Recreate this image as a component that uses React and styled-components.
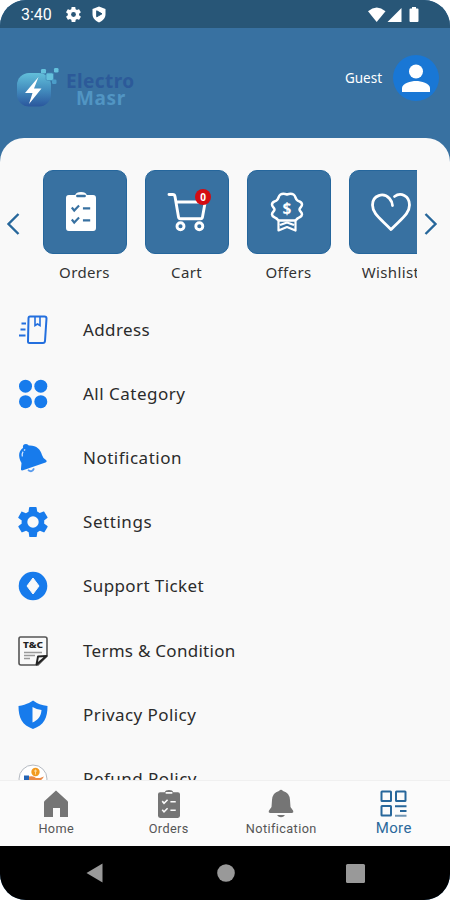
import React from 'react'
import styled, { createGlobalStyle } from 'styled-components'

const GlobalStyle = createGlobalStyle`
  * { box-sizing: border-box; }
  body { margin: 0; background: #fff; }
  svg { display: block; flex: none; overflow: visible; }
`;

const Phone = styled.div`
  width: 450px;
  height: 900px;
  display: flex;
  flex-direction: column;
  overflow: hidden;
  border-radius: 26px;
  background: #3871a1;
  font-family: "Noto Sans", "Open Sans", sans-serif;
`;

const StatusBar = styled.div`
  height: 28px;
  flex: none;
  display: flex;
  align-items: center;
  padding: 1px 31px 0 21px;
  background: #285677;
  color: #fff;
`;

const Clock = styled.span`
  font-family: Roboto, sans-serif;
  font-size: 16px;
  line-height: 20px;
  width: 45px;
`;

const StatusIcons = styled.div`
  display: flex;
  align-items: center;
  gap: 11px;
  margin-left: ${props => props.$end ? 'auto' : '0'};
`;

const Header = styled.header`
  height: 110px;
  flex: none;
  display: flex;
  justify-content: space-between;
  padding: 27px 11px 0 16px;
`;

const Brand = styled.div`
  display: flex;
  padding-top: 13px;
`;

const BrandName = styled.div`
  display: flex;
  flex-direction: column;
  padding: 5px 0 0 7px;
  font-size: 19px;
  font-weight: 700;
  line-height: 17px;
`;

const BrandWord = styled.span`
  color: ${props => props.$color};
  padding-left: ${props => props.$indent}px;
  letter-spacing: ${props => props.$spacing}px;
`;

const User = styled.div`
  display: flex;
  align-items: center;
  gap: 11px;
  height: 46px;
  color: #fff;
  font-size: 13.5px;
`;

const Avatar = styled.div`
  width: 46px;
  height: 46px;
  border-radius: 50%;
  background: #1977d5;
  display: flex;
  align-items: center;
  justify-content: center;
`;

const Sheet = styled.main`
  flex: 1;
  min-height: 0;
  display: flex;
  flex-direction: column;
  overflow: hidden;
  border-radius: 24px 24px 0 0;
  background: #f9f9f9;
`;

const Carousel = styled.section`
  display: flex;
  flex: none;
  height: 159.5px;
  padding-top: 32px;
`;

const Arrow = styled.div`
  width: 33px;
  height: 107px;
  flex: none;
  display: flex;
  align-items: center;
  justify-content: ${props => props.$right ? 'flex-start' : 'flex-end'};
  padding: ${props => props.$right ? '0 0 0 7px' : '0 13px 0 0'};
`;

const Strip = styled.div`
  flex: 1;
  display: flex;
  gap: 18px;
  padding-left: 10px;
  overflow: hidden;
`;

const Shortcut = styled.div`
  width: 84px;
  flex: none;
  display: flex;
  flex-direction: column;
  align-items: center;
`;

const Caption = styled.span`
  padding-right: 1px;
  color: #333;
  font-size: 15px;
  line-height: 20px;
  letter-spacing: 0.35px;
  white-space: nowrap;
`;

const Tile = styled.div`
  position: relative;
  width: 84px;
  height: 84px;
  margin-bottom: 8px;
  padding: 0 ${props => props.$inset || 0}px 1px 0;
  border-radius: 10px;
  background: #3871a1;
  border: 1px solid #25669c;
  display: flex;
  align-items: center;
  justify-content: center;
`;

const Badge = styled.span`
  position: absolute;
  top: 18px;
  left: 49px;
  width: 16px;
  height: 16px;
  border-radius: 50%;
  background: #d40b12;
  color: #fff;
  font-size: 10px;
  font-weight: 700;
  line-height: 16px;
  text-align: center;
`;

const Menu = styled.ul`
  flex: 1;
  min-height: 0;
  margin: 0;
  padding: 0;
  list-style: none;
  overflow: hidden;
`;

const MenuItem = styled.li`
  height: 64.2px;
  display: flex;
  align-items: center;
  gap: 35px;
  padding-left: 18px;
  color: #2b2b2b;
  font-size: 17px;
  line-height: 24px;
  letter-spacing: ${props => props.$spacing}px;
`;

const BottomNav = styled.nav`
  height: 66px;
  flex: none;
  display: flex;
  background: #fbfbfb;
  border-top: 1px solid #f0f0f0;
`;

const NavItem = styled.div`
  flex: 1;
  display: flex;
  flex-direction: column;
  align-items: center;
  padding-top: 9px;
  gap: ${props => props.$active ? '1px' : '2px'};
  color: ${props => props.$active ? '#2b699c' : '#555'};
  font-family: Roboto, sans-serif;
  font-size: ${props => props.$active ? '15px' : '12.7px'};
  line-height: 18px;
  letter-spacing: 0.4px;
`;

const SystemBar = styled.div`
  height: 54px;
  flex: none;
  display: flex;
  align-items: center;
  justify-content: space-between;
  padding: 0 85px 0 86px;
  background: #000;
`;

const GEAR = 'M19.4 13c0-.3.1-.6.1-1s0-.7-.1-1l2.1-1.6c.2-.2.3-.5.1-.7l-2-3.4c-.1-.3-.4-.3-.6-.3l-2.5 1c-.5-.4-1.1-.7-1.7-1L14.4 2.400c0-.2-.2-.4-.5-.4h-4c-.2 0-.4.2-.5.4L9 5.100c-.6.2-1.2.6-1.7 1l-2.5-1c-.2-.1-.5 0-.6.2l-2 3.5c-.1.2-.1.5.1.6L4.500 11c0 .3-.1.7-.1 1s0 .7.1 1l-2.1 1.600c-.2.2-.3.5-.1.7l2 3.400c.1.3.4.3.6.2l2.500-1c.5.4 1.100.8 1.700 1l.4 2.700c0 .2.2.4.5.4h4c.2 0 .4-.2.5-.4l.4-2.700c.6-.2 1.200-.6 1.700-1l2.500 1c.2.1.5 0 .6-.2l2-3.400c.1-.2.1-.5-.1-.7Z'

const Gear = ({ size, color, hole, r = 3.8 }) => (
  <svg width={size} height={size} viewBox="2 2 20 20">
    <path d={GEAR} fill={color} />
    <circle cx="12" cy="12" r={r} fill={hole} />
  </svg>
)

const ShieldSmall = () => (
  <svg width="14" height="17" viewBox="0 0 14 17">
    <path d="M7 .5 13.500 3v5c0 4-2.500 6.800-6.500 8.500C3 14.800.5 12 .5 8V3Z" fill="#fff" />
    <path d="M4.700 4.800 10 7.800 4.700 10.800Z" fill="#285677" stroke="#285677" strokeLinejoin="round" />
  </svg>
)

const Signals = () => (
  <svg width="51" height="16" viewBox="0 0 51 16">
    <path d="M0 4.200Q8.700-3.200 17.500 4.200L8.700 15Z" fill="#fff" />
    <path d="M33.500 1v14H19.500Z" fill="#fff" />
    <path d="M44 0h4v1.500h1.500q1 0 1 1V14q0 1-1 1h-7q-1 0-1-1V2.500q0-1 1-1H44Z" fill="#fff" />
  </svg>
)

const Logo = () => (
  <svg width="43" height="41" viewBox="0 0 43 41">
    <defs>
      <linearGradient id="logo" x1="0" y1="0" x2="0" y2="1">
        <stop offset="0" stopColor="#62bfda" />
        <stop offset=".5" stopColor="#438dbe" />
        <stop offset="1" stopColor="#2b579d" />
      </linearGradient>
    </defs>
    <rect x="1" y="5" width="34" height="33.500" rx="12" fill="url(#logo)" />
    <path d="m22.500 9-13.500 16h7.500L13 36l12.500-15.500H18Z" fill="#fff" />
    <g fill="#64c1dc">
      <rect x="30" y="5" width="7.500" height="7.500" rx="1.500" stroke="#3f86b5" strokeWidth=".7" />
      <rect x="25" y="1" width="5" height="4.500" rx="1.300" />
      <rect x="38" y="0" width="4.500" height="4.500" rx="1.300" />
      <rect x="36" y="11.500" width="4.500" height="4.500" rx="1.300" fill="#4c9dc9" />
    </g>
  </svg>
)

const Chevron = ({ flip }) => (
  <svg width="13" height="22" viewBox="0 0 13 22">
    <path d={flip ? 'm1.500 1 10 10-10 10' : 'm11.500 1-10 10 10 10'} fill="none" stroke="#27679b" strokeWidth="2.400" />
  </svg>
)

const Clipboard = ({ width, height, color, mark, clip }) => (
  <svg width={width} height={height} viewBox="0 0 31 39" preserveAspectRatio="none">
    <path d="M3 3h6.500q1-3 6-3t6 3H28q3 0 3 3v30q0 3-3 3H3q-3 0-3-3V6q0-3 3-3Z" fill={color} />
    <rect x="10.500" y="2.800" width="10" height="2.500" rx="1" fill={clip} />
    <path d="m6 15.500 2.500 3 5-5M6 27.500l2.500 3 5-5M17.500 16.300H25M17.500 28.300H25" fill="none" stroke={mark} strokeWidth="2.200" />
  </svg>
)

const CartIcon = () => (
  <svg width="40" height="40" viewBox="0 0 40 40" fill="none" stroke="#fff" strokeWidth="2.900" strokeLinejoin="round" strokeLinecap="round">
    <path d="M2 2.500h3.800q1.800 0 2.200 2L11.500 25q.3 1.800 2 1.800h20q1.700 0 2-1.800L38.200 10H10" />
    <circle cx="13.500" cy="34.200" r="3.500" />
    <circle cx="32.300" cy="34.200" r="3.500" />
  </svg>
)

const OffersIcon = () => (
  <svg width="34" height="40" viewBox="0 0 34 40" fill="none" stroke="#fff" strokeWidth="2.500" strokeLinejoin="round">
    <path d="M17 2.500q4-1.500 6.500 0c2.500 1.500 1.500 4.500 4 6s4.500 1.500 4.500 4-2.500 3-2.500 5 2.500 2.500 2.500 5-3 2.500-4.500 4-1 2-3 2h-15c-2 0-1.500-.5-3-2s-4.500-1.500-4.500-4 2.500-3 2.500-5S2 15 2 12.500s2-2.500 4.500-4 1.500-4.500 4-6q2.500-1.500 6.500 0Z" />
    <path d="M8.500 28.500V38.500l8.500-3.500 8.500 3.500V28.500M10 33l7-2.500 7 2.500" strokeWidth="2.200" />
    <text x="17" y="21.500" textAnchor="middle" fontSize="15.500" fontWeight="700" fill="#fff" stroke="none">$</text>
  </svg>
)

const HeartIcon = () => (
  <svg width="40" height="38" viewBox="0 0 40 38">
    <path d="M21.500 12.500q0-3.500-3-7C12.500-1 1.500 2 1.500 12c0 9 8.500 14 18.500 24.500C30 26 38.500 21 38.500 12 38.500 2.500 29.500-1 23.500 3.500" fill="none" stroke="#fff" strokeWidth="2.800" strokeLinecap="round" strokeLinejoin="round" />
  </svg>
)

const AddressIcon = () => (
  <svg width="30" height="30" viewBox="0 0 30 30" fill="none" stroke="#236fde" strokeWidth="2.200">
    <path d="M12 1.500h14.500q2 0 2 2L27 26q-.2 2-2 2H11.500Q10 28 10 26.500L10.500 3.500q0-2 1.500-2Z" strokeWidth="2" />
    <path d="M17 2v8.500l2.500-1.500 2.500 1.500V2" strokeWidth="1.600" />
    <path d="M3.500 8.500H8M2.500 14.500h5M1 20.500h6.500" />
  </svg>
)

const CategoryIcon = () => (
  <svg width="30" height="30" viewBox="0 0 30 30" fill="#177bec">
    <circle cx="7.500" cy="7.200" r="6.500" /><circle cx="22.800" cy="7.200" r="6.500" />
    <circle cx="7.500" cy="22.700" r="6.500" /><circle cx="22.800" cy="22.700" r="6.500" />
  </svg>
)

const BellIcon = () => (
  <svg width="30" height="30" viewBox="0 0 30 30">
    <path d="M6.500 1.200Q9.500.3 10.800 2.500C18 2 22.500 6 24 12q.5 2.500 4 5 1.500 1.700-.5 2.500L5 27.300q-2.500.7-2-1.700L3.500 20C-.5 13 1 7.500 5 5Q4.500 1.800 6.500 1.200Z" fill="#177bec" />
    <path d="M10 27q4 3.200 6-1.700" fill="none" stroke="#5a9bec" strokeWidth="1.800" />
    <path d="M4.300 13.500q-.8-4.500 2.900-7" fill="none" stroke="#d8e9ff" strokeWidth="1.200" strokeDasharray="5 1.500" />
  </svg>
)

const TicketIcon = () => (
  <svg width="30" height="30" viewBox="0 0 30 30">
    <circle cx="15" cy="15" r="14.300" fill="#177bec" />
    <path d="M15 7 21 15l-6 8-6-8Z" fill="#f9f9f9" stroke="#f9f9f9" strokeLinejoin="round" />
  </svg>
)

const TermsIcon = () => (
  <svg width="30" height="30" viewBox="0 0 30 30">
    <path d="M2.500 1H27q2 0 2 2v17l-9 9H3q-2 0-2-2V3q0-2 1.500-2Z" fill="none" stroke="#555" strokeWidth="1.600" />
    <text x="15" y="12" textAnchor="middle" textLength="20" lengthAdjust="spacingAndGlyphs" fontSize="8.500" fontWeight="800" letterSpacing="0" fill="#222">T&amp;C</text>
    <path d="M6 16.500h18M6 19.500h11M6 22.500h6" stroke="#999" strokeWidth="1.500" />
    <path d="M18.500 28.500 20 20.500l8.500-.5Z" fill="#f9f9f9" stroke="#222" strokeWidth="1.900" strokeLinejoin="round" />
  </svg>
)

const PrivacyIcon = () => (
  <svg width="30" height="30" viewBox="0 0 30 30">
    <path d="M15 .5Q21 5 29.500 6C29.500 18 26 25 15 29 4 25 .5 18 .5 6 9 5 15 .5 15 .5Z" fill="#177bec" />
    <path d="M14.500 7q4 2.500 9 3c-.5 6-3 10-9 12.500Z" fill="#f9f9f9" />
  </svg>
)

const RefundIcon = () => (
  <svg width="30" height="30" viewBox="0 0 30 30">
    <circle cx="15" cy="15" r="14" fill="#fff" stroke="#b5bac2" strokeWidth="1" />
    <circle cx="17.500" cy="8" r="4.200" fill="#f29a20" />
    <path d="M17.500 5.500v5M16 7h3" stroke="#ffdb9f" strokeWidth="1" />
    <path d="M6 11.500h5V20H6Z" fill="#2464b4" />
    <path d="M11 12.500q5-1 7 1.500h4l4-1.500q-3 5-8 6h-7Z" fill="#eb8a46" />
  </svg>
)

const HomeIcon = () => (
  <svg width="24" height="28" viewBox="0 0 24 28">
    <path d="M12 .5 23.500 11q.5.500.5 1.500V27H16V18H9v9H0V12.500q0-1 .5-1.500Z" fill="#757575" />
  </svg>
)

const NavBell = () => (
  <svg width="26" height="28" viewBox="0 0 26 28" fill="#757575">
    <path d="M11 1q2-2.500 4 0 6.500 1.500 7 9l.5 7 2.500 3.500q1 2.500-1.500 2.500h-21Q0 23 1 20.500L3.500 17l.5-7q.5-7.500 7-9Z" />
    <path d="M9 25h8q-1.500 2.200-4 2.200T9 25Z" />
  </svg>
)

const MoreIcon = () => (
  <svg width="27" height="28" viewBox="0 0 27 28" fill="none" stroke="#27679b" strokeWidth="2">
    <rect x="1.500" y="1.500" width="9.500" height="9.500" rx=".5" />
    <rect x="16" y="1.500" width="9.500" height="9.500" rx=".5" />
    <rect x="1.500" y="16" width="9.500" height="9.500" rx=".5" />
    <path d="M15 16.200h11.500M20 21h6.500" />
    <path d="M15 25.800h11.500" stroke="#6f95b4" />
  </svg>
)

const shortcuts = [
  { label: 'Orders', icon: <Clipboard width={30} height={39} color="#fff" mark="#3871a1" clip="#3871a1" />, inset: 9 },
  { label: 'Cart', icon: <CartIcon />, count: 0 },
  { label: 'Offers', icon: <OffersIcon />, inset: 5 },
  { label: 'Wishlist', icon: <HeartIcon /> },
]

const menu = [
  { label: 'Address', icon: <AddressIcon />, spacing: 0.4 },
  { label: 'All Category', icon: <CategoryIcon />, spacing: 0.5 },
  { label: 'Notification', icon: <BellIcon />, spacing: 0.5 },
  { label: 'Settings', icon: <Gear size={30} color="#177bec" hole="#f9f9f9" />, spacing: 0.55 },
  { label: 'Support Ticket', icon: <TicketIcon />, spacing: 0.4 },
  { label: 'Terms & Condition', icon: <TermsIcon />, spacing: 0.27 },
  { label: 'Privacy Policy', icon: <PrivacyIcon />, spacing: 0.43 },
  { label: 'Refund Policy', icon: <RefundIcon />, spacing: 0.45 },
]

export default function App() {
  return (
    <Phone>
      <GlobalStyle />
      <StatusBar>
        <Clock>3:40</Clock>
        <StatusIcons>
          <Gear size={15} color="#fff" hole="#285677" r={3.2} />
          <ShieldSmall />
        </StatusIcons>
        <StatusIcons $end>
          <Signals />
        </StatusIcons>
      </StatusBar>
      <Header>
        <Brand>
          <Logo />
          <BrandName>
            <BrandWord $color="#2c5a99" $indent={0} $spacing={0.4}>Electro</BrandWord>
            <BrandWord $color="#5195c3" $indent={10} $spacing={0.6}>Masr</BrandWord>
          </BrandName>
        </Brand>
        <User>
          <span>Guest</span>
          <Avatar>
            <svg width="28" height="28" viewBox="0 0 28 28" fill="#fff">
              <circle cx="14" cy="7.500" r="7" />
              <path d="M0 28v-4c0-4.500 9-7 14-7s14 2.500 14 7v4Z" />
            </svg>
          </Avatar>
        </User>
      </Header>
      <Sheet>
        <Carousel>
          <Arrow><Chevron /></Arrow>
          <Strip>
            {shortcuts.map(item => (
              <Shortcut key={item.label}>
                <Tile $inset={item.inset}>
                  {item.icon}
                  {item.count !== undefined && <Badge>{item.count}</Badge>}
                </Tile>
                <Caption>{item.label}</Caption>
              </Shortcut>
            ))}
          </Strip>
          <Arrow $right><Chevron flip /></Arrow>
        </Carousel>
        <Menu>
          {menu.map(item => (
            <MenuItem key={item.label} $spacing={item.spacing}>
              {item.icon}
              <span>{item.label}</span>
            </MenuItem>
          ))}
        </Menu>
      </Sheet>
      <BottomNav>
        <NavItem><HomeIcon />Home</NavItem>
        <NavItem><Clipboard width={22} height={28} color="#757575" mark="#fbfbfb" clip="#fbfbfb" />Orders</NavItem>
        <NavItem><NavBell />Notification</NavItem>
        <NavItem $active><MoreIcon />More</NavItem>
      </BottomNav>
      <SystemBar>
        <svg width="17" height="20" viewBox="0 0 17 20"><path d="M16.500.5v19L.5 10Z" fill="#999" /></svg>
        <svg width="18" height="18" viewBox="0 0 18 18"><circle cx="10" cy="9" r="8.800" fill="#999" /></svg>
        <svg width="19" height="19" viewBox="0 0 19 19"><rect width="19" height="19" rx="1.500" fill="#999" /></svg>
      </SystemBar>
    </Phone>
  )
}
